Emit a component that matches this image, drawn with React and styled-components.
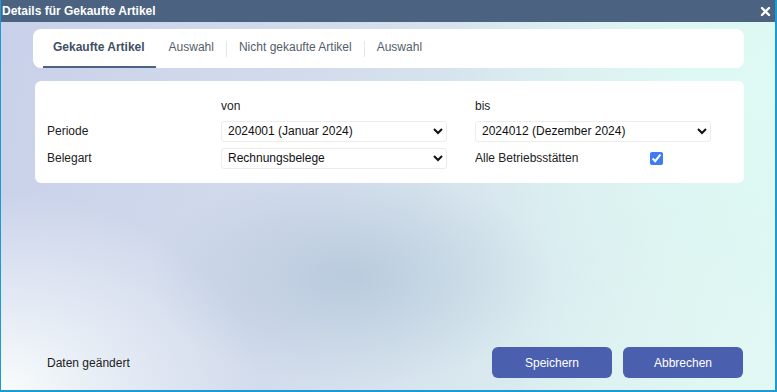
import React, { useState } from "react";
import styled, { createGlobalStyle } from "styled-components";

const GlobalStyle = createGlobalStyle`
  html, body {
    margin: 0;
    padding: 0;
    font-family: "Liberation Sans", Arial, sans-serif;
    font-size: 12px;
    color: #222;
  }
`;

const Window = styled.div`
  width: 777px;
  height: 392px;
  box-sizing: border-box;
  border-left: 1px solid #1b9ad8;
  border-right: 2px solid #1b9ad8;
  border-bottom: 2px solid #1b9ad8;
  display: flex;
  flex-direction: column;
  overflow: hidden;
`;

const TitleBar = styled.div`
  height: 22px;
  flex: none;
  background: #4b6381;
  color: #fff;
  font-weight: bold;
  font-size: 12px;
  display: flex;
  align-items: center;
  justify-content: space-between;
  padding: 0 4px 0 1px;
`;

const CloseButton = styled.button`
  border: 0;
  background: none;
  padding: 0;
  width: 11px;
  height: 11px;
  display: flex;
  cursor: pointer;
`;

const Body = styled.div`
  flex: 1;
  display: flex;
  flex-direction: column;
  padding: 7px 31px 12px 32px;
  background:
    radial-gradient(ellipse 200px 110px at 350px 255px, rgba(176, 196, 216, 0.75), rgba(176, 196, 216, 0) 100%),
    radial-gradient(ellipse 260px 200px at 0px 370px, rgba(248, 252, 252, 1), rgba(248, 252, 252, 0) 100%),
    radial-gradient(ellipse 330px 260px at 777px 60px, rgba(222, 250, 244, 1), rgba(222, 250, 244, 0) 100%),
    radial-gradient(ellipse 260px 200px at 777px 370px, rgba(226, 248, 244, 1), rgba(226, 248, 244, 0) 100%),
    linear-gradient(100deg, #c9d1ea 0%, #d3dcec 40%, #dbeef0 75%, #def6f2 100%);
`;

const TabCard = styled.div`
  background: #fff;
  border-radius: 8px;
  height: 39px;
  display: flex;
  align-items: stretch;
  padding-left: 10px;
`;

const Tab = styled.div`
  position: relative;
  display: flex;
  align-items: center;
  padding: 0 12px 1px 13px;
  color: ${(p) => (p.$active ? "#3f4f66" : "#555d6a")};
  font-weight: ${(p) => (p.$active ? "bold" : "normal")};
  border-bottom: 2px solid ${(p) => (p.$active ? "#4b6381" : "transparent")};
  cursor: pointer;

  &:first-child {
    padding: 0 11px 1px 10px;
  }

  & + &::before {
    content: "";
    position: absolute;
    left: 0;
    top: 12px;
    height: 16px;
    border-left: 1px solid #e6e6e6;
  }
`;

const FormCard = styled.div`
  margin: 13px 0 0 2px;
  background: #fff;
  border-radius: 6px;
  padding: 15px 12px 14px 12px;
  display: grid;
  grid-template-columns: 146px 226px 236px;
  column-gap: 28px;
  grid-template-rows: 19px 22px 22px;
  row-gap: 5px;
  align-items: center;
`;

const Label = styled.div`
  white-space: nowrap;
`;

const Select = styled.select`
  height: 21px;
  width: 100%;
  border: 1px solid #ececec;
  border-radius: 3px;
  background: #fff;
  font-family: "Liberation Sans", Arial, sans-serif;
  font-size: 12px;
  color: #111;
  padding: 0 0 0 2px;
  outline: none;
`;

const CheckRow = styled.div`
  display: flex;
  align-items: center;
  justify-content: space-between;
  width: 188px;
`;

const Check = styled.input`
  width: 13px;
  height: 13px;
  margin: 0;
  accent-color: #3d7cf4;
`;

const Footer = styled.div`
  margin-top: auto;
  display: flex;
  align-items: center;
  padding: 0 1px 0 14px;
  gap: 11px;
`;

const Status = styled.div`
  margin-right: auto;
`;

const Button = styled.button`
  width: 120px;
  height: 31px;
  border: 0;
  border-radius: 6px;
  background: #4a5fad;
  color: #fff;
  font-family: "Liberation Sans", Arial, sans-serif;
  font-size: 12px;
  cursor: pointer;
`;

const tabs = ["Gekaufte Artikel", "Auswahl", "Nicht gekaufte Artikel", "Auswahl"];

export default function App() {
  const [active, setActive] = useState(0);
  const [alle, setAlle] = useState(true);

  return (
    <>
      <GlobalStyle />
      <Window>
        <TitleBar>
          <span>Details für Gekaufte Artikel</span>
          <CloseButton aria-label="Schließen">
            <svg width="11" height="11" viewBox="0 0 11 11">
              <path d="M2 2 L9 9 M9 2 L2 9" stroke="#fff" strokeWidth="2.4" strokeLinecap="round" />
            </svg>
          </CloseButton>
        </TitleBar>
        <Body>
          <TabCard>
            {tabs.map((t, i) => (
              <Tab key={i} $active={i === active} onClick={() => setActive(i)}>
                {t}
              </Tab>
            ))}
          </TabCard>

          <FormCard>
            <span />
            <Label>von</Label>
            <Label>bis</Label>

            <Label>Periode</Label>
            <Select defaultValue="2024001">
              <option value="2024001">2024001 (Januar 2024)</option>
            </Select>
            <Select defaultValue="2024012">
              <option value="2024012">2024012 (Dezember 2024)</option>
            </Select>

            <Label>Belegart</Label>
            <Select defaultValue="r">
              <option value="r">Rechnungsbelege</option>
            </Select>
            <CheckRow>
              <Label>Alle Betriebsstätten</Label>
              <Check type="checkbox" checked={alle} onChange={(e) => setAlle(e.target.checked)} />
            </CheckRow>
          </FormCard>

          <Footer>
            <Status>Daten geändert</Status>
            <Button>Speichern</Button>
            <Button>Abbrechen</Button>
          </Footer>
        </Body>
      </Window>
    </>
  );
}
